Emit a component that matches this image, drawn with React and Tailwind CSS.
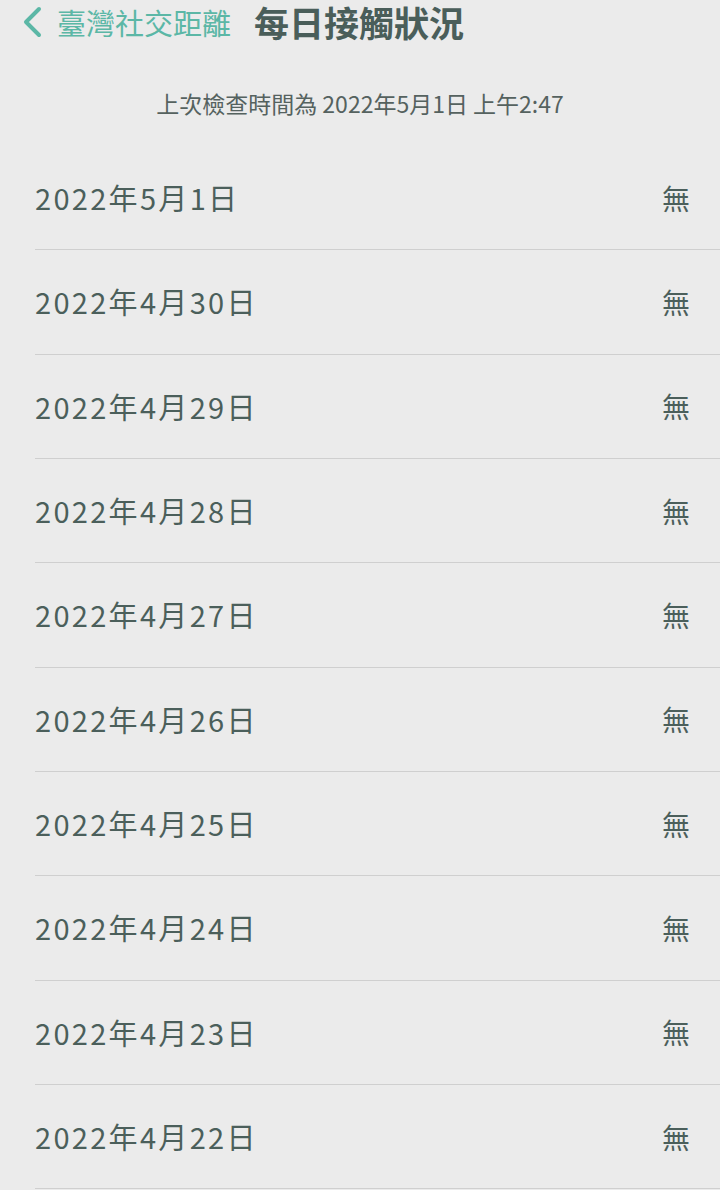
import React from "react";

const dates = [
  ["2022", "5", "1"],
  ["2022", "4", "30"],
  ["2022", "4", "29"],
  ["2022", "4", "28"],
  ["2022", "4", "27"],
  ["2022", "4", "26"],
  ["2022", "4", "25"],
  ["2022", "4", "24"],
  ["2022", "4", "23"],
  ["2022", "4", "22"],
];

export default function App() {
  return (
    <div
      className="w-[720px] h-[1190px] overflow-hidden bg-[#ebebeb] text-[#4b5f5b]"
      style={{ fontFamily: '"Noto Sans CJK TC", "Noto Sans", sans-serif' }}
    >
      <div className="h-[44px] flex items-center">
        <svg
          className="ml-[22px] w-[20px] h-[32px]"
          viewBox="0 0 20 32"
          fill="none"
          stroke="#5bb7a6"
          strokeWidth="4"
          strokeLinecap="round"
          strokeLinejoin="round"
        >
          <path d="M17 3 L4 16 L17 29" />
        </svg>
        <span className="ml-[15px] text-[29px] leading-[44px] text-[#5bb7a6]">
          臺灣社交距離
        </span>
        <span className="ml-[23px] text-[35px] leading-[44px] font-bold text-[#4a5e5a]">
          每日接觸狀況
        </span>
      </div>
      <div className="h-[102px] pt-[16px] flex items-center justify-center text-[23px] leading-none text-[#55625f]">
        上次檢查時間為 2022年5月1日 上午2:47
      </div>
      <div>
        {dates.map(([y, m, d], i) => (
          <div
            key={i}
            className="ml-[35px] h-[104.33px] border-b border-[#cfcfcf] flex items-center justify-between pr-[30px]"
          >
            <span className="text-[29px] leading-none tracking-[2.3px]">
              {y}年{m}月{d}日
            </span>
            <span className="text-[28px] leading-none">無</span>
          </div>
        ))}
      </div>
    </div>
  );
}
